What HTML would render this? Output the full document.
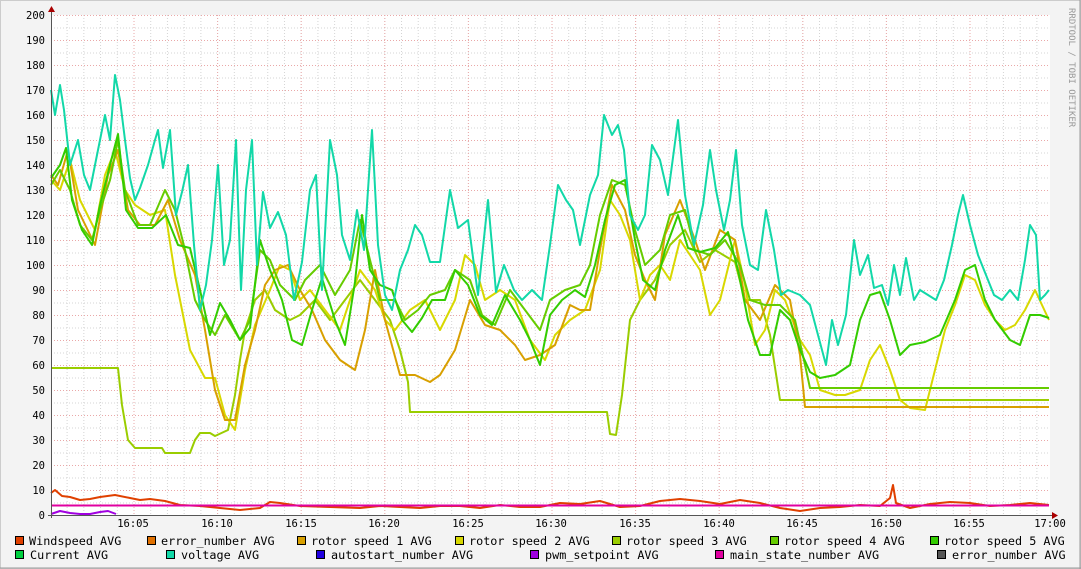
<!DOCTYPE html>
<html><head><meta charset="utf-8"><style>
body{margin:0;width:1081px;height:569px;overflow:hidden;background:#f3f3f3;}
svg{display:block}
text{font-family:"DejaVu Sans Mono","Liberation Mono",monospace;font-size:10.5px;fill:#000}
.lg{font-size:11.8px}
</style></head><body>
<svg width="1081" height="569" xmlns="http://www.w3.org/2000/svg">
<defs>
<pattern id="ph" x="0" y="15" width="1081" height="12.5" patternUnits="userSpaceOnUse">
<line x1="0" y1="0.5" x2="1081" y2="0.5" stroke="#d4d4d4" stroke-dasharray="1,2"/></pattern>
<pattern id="pv" x="49.9" y="0" width="16.72" height="569" patternUnits="userSpaceOnUse">
<line x1="0.5" y1="0" x2="0.5" y2="569" stroke="#d4d4d4" stroke-dasharray="1,2"/></pattern>
<pattern id="Ph" x="0" y="15" width="1081" height="25" patternUnits="userSpaceOnUse">
<line x1="0" y1="0.5" x2="1081" y2="0.5" stroke="#eaa8a8" stroke-dasharray="1,2"/></pattern>
<pattern id="Pv" x="49.9" y="0" width="83.6" height="569" patternUnits="userSpaceOnUse">
<line x1="0.5" y1="0" x2="0.5" y2="569" stroke="#eaa8a8" stroke-dasharray="1,2"/></pattern>
</defs>
<rect x="0.5" y="0.5" width="1080" height="568" fill="#f3f3f3" stroke="#ccc"/>
<line x1="0" y1="568" x2="1081" y2="568" stroke="#999"/>
<line x1="1080" y1="0" x2="1080" y2="569" stroke="#999"/>
<rect x="51" y="15" width="999" height="500" fill="#fff"/>
<rect x="51" y="15" width="999" height="500" fill="url(#ph)"/>
<rect x="51" y="15" width="999" height="500" fill="url(#pv)"/>
<rect x="51" y="15" width="999" height="500" fill="url(#Ph)"/>
<rect x="51" y="15" width="1000" height="500" fill="url(#Pv)"/>
<g text-anchor="end">
<text x="45" y="19">200</text><text x="45" y="44">190</text><text x="45" y="69">180</text><text x="45" y="94">170</text><text x="45" y="119">160</text><text x="45" y="144">150</text><text x="45" y="169">140</text><text x="45" y="194">130</text><text x="45" y="219">120</text><text x="45" y="244">110</text><text x="45" y="269">100</text><text x="45" y="294">90</text><text x="45" y="319">80</text><text x="45" y="344">70</text><text x="45" y="369">60</text><text x="45" y="394">50</text><text x="45" y="419">40</text><text x="45" y="444">30</text><text x="45" y="469">20</text><text x="45" y="494">10</text><text x="45" y="519">0</text>
</g>
<g text-anchor="middle">
<text x="133" y="527">16:05</text><text x="217" y="527">16:10</text><text x="301" y="527">16:15</text><text x="384" y="527">16:20</text><text x="468" y="527">16:25</text><text x="551" y="527">16:30</text><text x="635" y="527">16:35</text><text x="719" y="527">16:40</text><text x="802" y="527">16:45</text><text x="886" y="527">16:50</text><text x="969" y="527">16:55</text><text x="1050" y="527">17:00</text>
</g>
<text x="1069" y="8" transform="rotate(90 1069 8)" style="font-size:9px;fill:#999">RRDTOOL / TOBI OETIKER</text>
<g fill="none" stroke-width="2" stroke-linejoin="round">
<polyline stroke="#9acd00" points="51,368 118,368 122,405 128,440 135,448 162,448 165,453 190,453 195,440 200,433 210,433 215,436 228,430 235,395 240,360 245,330 255,300 265,290 275,310 290,320 300,315 315,300 330,320 345,300 360,280 375,300 390,320 400,350 408,382 410,412 607,412 610,434 616,435 622,395 630,320 640,300 655,280 670,245 685,230 700,262 715,250 735,262 745,300 760,300 770,335 780,400 1049,400"/>
<polyline stroke="#d8d800" points="51,180 60,190 70,160 80,200 95,230 105,175 115,150 125,190 135,205 150,215 165,210 175,275 190,350 205,378 215,378 225,415 235,430 245,370 255,325 270,290 280,265 290,270 300,300 310,290 325,310 340,330 350,300 360,270 375,290 385,320 395,330 410,310 425,300 440,330 455,300 465,255 475,265 485,300 500,290 515,300 530,340 545,360 555,335 570,320 585,310 600,270 610,200 620,215 630,240 640,300 650,275 660,265 670,280 680,240 690,255 700,270 710,315 720,300 735,240 745,285 755,345 765,330 775,290 785,300 800,340 810,355 820,390 835,395 845,395 860,390 870,360 880,345 890,370 900,400 910,408 925,410 935,370 945,330 955,305 965,275 975,280 985,305 995,320 1005,330 1015,325 1025,310 1035,290 1049,320"/>
<polyline stroke="#d8a000" points="51,175 58,185 68,150 78,210 95,245 108,175 118,150 128,210 140,225 155,225 168,200 180,240 195,275 205,330 215,390 225,420 235,420 245,365 255,330 265,285 275,270 288,265 300,290 312,310 325,340 340,360 355,370 365,330 375,270 385,320 400,375 415,375 430,382 440,375 455,350 470,300 485,325 500,330 515,345 525,360 540,355 555,345 570,305 580,310 590,310 600,250 612,185 625,210 635,255 645,280 655,300 665,235 680,200 695,240 705,270 720,230 735,240 745,300 760,320 775,285 790,300 800,355 805,407 1049,407"/>
<polyline stroke="#66cc00" points="51,185 60,170 70,190 80,225 92,240 100,210 110,180 118,140 125,190 138,225 150,225 165,190 175,210 185,250 195,300 205,320 215,335 225,315 240,340 250,320 260,250 270,260 280,285 295,300 305,280 320,265 335,295 350,270 360,220 370,260 380,300 395,300 405,320 418,310 430,295 445,290 455,270 470,280 482,315 495,325 510,290 525,310 540,330 550,300 565,290 580,285 590,265 600,215 612,180 625,185 635,230 645,265 660,250 670,215 685,210 695,250 710,255 725,240 740,265 750,300 765,305 780,305 795,320 805,365 810,388 1049,388"/>
<polyline stroke="#33cc00" points="51,178 60,165 66,148 72,200 82,230 92,245 100,205 110,165 118,134 126,210 138,228 152,228 166,215 178,245 190,248 200,290 210,335 220,303 230,320 240,340 250,328 260,240 270,270 282,300 292,340 302,345 312,310 322,278 335,320 345,345 355,282 362,215 370,270 380,285 392,290 402,320 412,332 422,318 432,300 445,300 455,270 468,285 480,315 492,325 505,295 520,320 530,340 540,365 550,315 562,300 575,290 585,297 595,265 605,220 615,185 625,180 635,240 643,280 655,290 665,250 678,215 688,248 700,252 715,248 728,232 738,270 748,320 760,355 770,355 780,310 790,320 800,350 810,372 820,378 835,375 850,365 860,320 870,295 880,292 890,320 900,355 910,345 925,342 940,335 955,300 965,270 975,265 985,300 995,320 1010,340 1020,345 1030,315 1040,315 1049,318"/>
<polyline stroke="#12d8a8" points="51,90 55,115 60,85 64,110 70,165 78,140 84,175 90,190 95,165 100,140 105,115 110,140 115,75 120,100 125,140 130,178 135,200 140,188 148,165 155,140 158,130 163,168 170,130 176,215 182,192 188,165 194,245 200,310 206,285 212,240 218,165 224,265 230,240 236,140 241,290 246,190 252,140 257,265 263,192 270,228 278,212 286,235 294,300 302,262 310,190 316,175 322,290 330,140 337,175 342,235 350,260 357,210 364,250 372,130 378,245 385,295 392,310 400,270 408,250 415,225 422,235 430,262 440,262 450,190 458,228 468,220 478,295 488,200 496,292 504,265 514,290 522,300 532,290 542,300 550,245 558,185 566,200 573,210 580,245 590,195 598,175 604,115 612,135 618,125 624,150 630,215 638,230 645,215 652,145 660,160 668,195 678,120 685,195 694,245 703,205 710,150 716,190 724,230 730,200 736,150 742,225 750,265 758,270 766,210 774,250 781,295 788,290 800,295 810,305 818,335 826,365 832,320 838,345 846,315 854,240 860,275 868,255 874,288 882,285 888,305 894,265 900,295 906,258 914,300 920,290 928,295 936,300 944,280 952,245 958,215 963,195 970,225 978,255 986,275 994,295 1002,300 1010,290 1018,300 1025,260 1030,225 1036,235 1040,300 1045,295 1049,290"/>
<polyline stroke="#e04000" points="51,493 55,490 62,496 70,497 80,500 90,499 100,497 115,495 130,498 140,500 150,499 165,501 180,505 200,506 220,508 240,510 260,508 270,502 280,503 300,506 330,507 360,508 380,506 400,507 420,508 440,506 460,506 480,508 500,505 520,507 540,507 560,503 580,504 600,501 620,507 640,506 660,501 680,499 700,501 720,504 740,500 760,503 780,508 800,511 820,508 840,507 860,505 880,506 890,498 893,485 896,503 910,508 930,504 950,502 970,503 990,506 1010,505 1030,503 1049,505"/>
<line x1="51" y1="505.5" x2="1049" y2="505.5" stroke="#e000a0"/>
<polyline stroke="#a000e0" points="51,514 60,511 70,513 80,514 90,514 100,512 108,511 116,514"/>
</g>
<line x1="51.5" y1="10" x2="51.5" y2="518" stroke="#555"/>
<line x1="48" y1="515.5" x2="1055" y2="515.5" stroke="#555"/>
<polygon points="48,12 55,12 51.5,6" fill="#a00"/>
<polygon points="1052,512 1052,519 1058,515.5" fill="#a00"/>
<g stroke="#000" stroke-width="1">
<rect x="15.5" y="536.5" width="8" height="8" fill="#e04000"/>
<rect x="147.5" y="536.5" width="8" height="8" fill="#e07000"/>
<rect x="297.5" y="536.5" width="8" height="8" fill="#d8a000"/>
<rect x="455.5" y="536.5" width="8" height="8" fill="#d8d800"/>
<rect x="612.5" y="536.5" width="8" height="8" fill="#9acd00"/>
<rect x="770.5" y="536.5" width="8" height="8" fill="#66cc00"/>
<rect x="930.5" y="536.5" width="8" height="8" fill="#33cc00"/>
<rect x="15.5" y="550.5" width="8" height="8" fill="#00d040"/>
<rect x="166.5" y="550.5" width="8" height="8" fill="#12d8a8"/>
<rect x="316.5" y="550.5" width="8" height="8" fill="#2000e0"/>
<rect x="530.5" y="550.5" width="8" height="8" fill="#a000e0"/>
<rect x="715.5" y="550.5" width="8" height="8" fill="#e000a0"/>
<rect x="937.5" y="550.5" width="8" height="8" fill="#555"/>
</g>
<text class="lg" x="29" y="545">Windspeed AVG</text>
<text class="lg" x="161" y="545">error_number AVG</text>
<text class="lg" x="311" y="545">rotor speed 1 AVG</text>
<text class="lg" x="469" y="545">rotor speed 2 AVG</text>
<text class="lg" x="626" y="545">rotor speed 3 AVG</text>
<text class="lg" x="784" y="545">rotor speed 4 AVG</text>
<text class="lg" x="944" y="545">rotor speed 5 AVG</text>
<text class="lg" x="30" y="559">Current AVG</text>
<text class="lg" x="181" y="559">voltage AVG</text>
<text class="lg" x="331" y="559">autostart_number AVG</text>
<text class="lg" x="545" y="559">pwm_setpoint AVG</text>
<text class="lg" x="730" y="559">main_state_number AVG</text>
<text class="lg" x="952" y="559">error_number AVG</text>
</svg>
</body></html>
